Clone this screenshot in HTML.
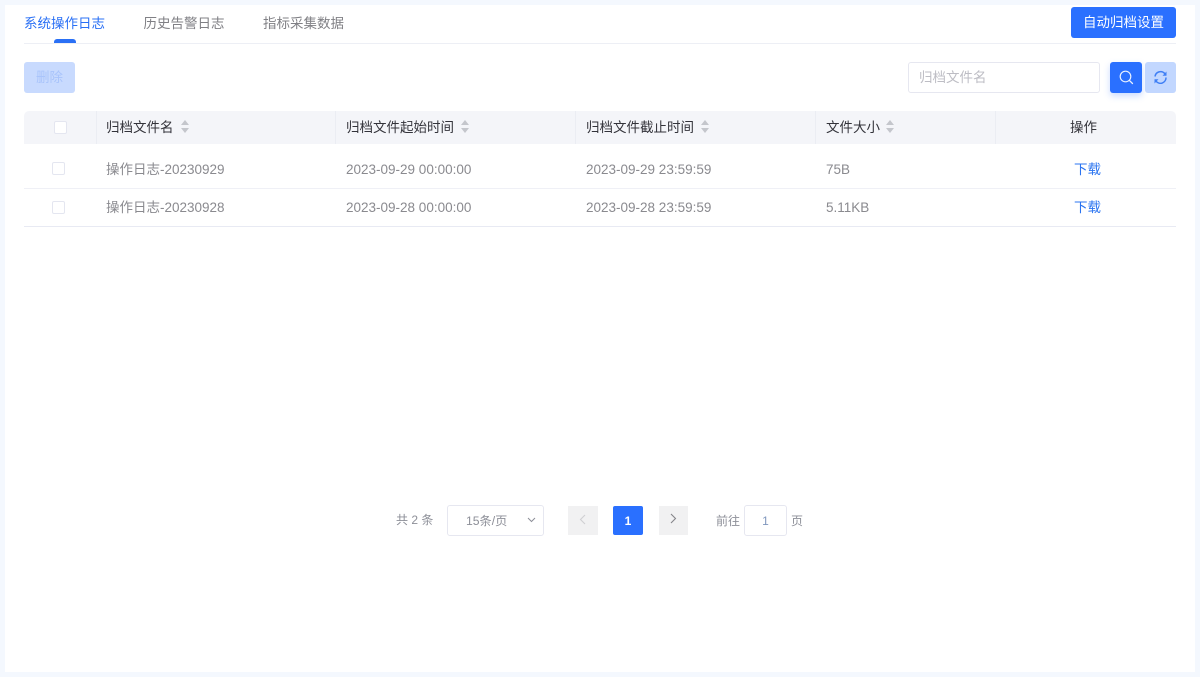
<!DOCTYPE html>
<html lang="zh-CN">
<head>
<meta charset="utf-8">
<title>归档</title>
<style>
html,body{margin:0;padding:0;width:1200px;height:677px;overflow:hidden;background:#f4f8fe}
body{font-family:"Liberation Sans","Noto Sans CJK SC",sans-serif;font-size:13.5px;color:#8a8a8f;position:relative}
.a{position:absolute;white-space:nowrap}
.t{line-height:20px;height:20px}
.cb{position:absolute;width:11px;height:11px;border:1px solid #e4e6f0;border-radius:2px;background:#fff}
.sep{position:absolute;top:111px;width:1px;height:33px;background:#ebedf3}
.sort{position:absolute;width:8px;height:13px}
.hd{color:#33333a}
.link{color:#2b74f0}
</style>
</head>
<body>
<div class="a" style="left:5px;top:5px;width:1190px;height:667px;background:#fff"></div>

<div class="a t" style="left:24px;top:14px;color:#2a70f5">系统操作日志</div>
<div class="a t" style="left:143.5px;top:14px;color:#808085">历史告警日志</div>
<div class="a t" style="left:263px;top:14px;color:#808085">指标采集数据</div>
<div class="a" style="left:24px;top:43px;width:1152px;height:1px;background:#edeff5"></div>
<div class="a" style="left:54px;top:39px;width:22px;height:4px;background:#2a70f5;border-radius:3px 3px 0 0"></div>
<div class="a" style="left:1071px;top:7px;width:105px;height:31px;line-height:31px;text-align:center;background:#2a70ff;color:#fff;border-radius:3px">自动归档设置</div>

<div class="a" style="left:24px;top:62px;width:51px;height:31px;line-height:31px;text-align:center;background:#c8dafe;color:#a9c4fb;border-radius:3px">删除</div>

<div class="a" style="left:908px;top:62px;width:190px;height:29px;border:1px solid #e6e7f0;border-radius:3px;line-height:29px;color:#bdbdc4;background:#fff"><span style="margin-left:10px">归档文件名</span></div>
<div class="a" style="left:1110px;top:62px;width:32px;height:31px;background:#2a70ff;border-radius:3px;box-shadow:0 3px 7px rgba(42,112,255,.25)">
<svg width="32" height="31" viewBox="0 0 32 31" style="display:block"><circle cx="15.5" cy="14.5" r="5.3" fill="none" stroke="#e8f0ff" stroke-width="1.2"/><path d="M19.4 18.4L22.5 21.5" stroke="#e8f0ff" stroke-width="1.3" fill="none" stroke-linecap="round"/></svg>
</div>
<div class="a" style="left:1145px;top:62px;width:31px;height:31px;background:#c2d7ff;border-radius:3px">
<svg width="31" height="31" viewBox="0 0 31 31" style="display:block"><path d="M10 14.5A5.6 5.6 0 0 1 19.8 11.6L21 13" fill="none" stroke="#3f7ff5" stroke-width="1.5"/><path d="M21 15.5A5.6 5.6 0 0 1 11.2 19.4L10 18" fill="none" stroke="#3f7ff5" stroke-width="1.5"/><path d="M21.5 9.5V13.8H17.5Z M9.5 21.5V17.2H13.5Z" fill="#3f7ff5"/></svg>
</div>

<div class="a" style="left:24px;top:111px;width:1152px;height:33px;background:#f4f5f9;border-radius:5px 5px 0 0"></div>
<div class="sep" style="left:96px"></div>
<div class="sep" style="left:335px"></div>
<div class="sep" style="left:575px"></div>
<div class="sep" style="left:815px"></div>
<div class="sep" style="left:995px"></div>
<div class="cb" style="left:54px;top:121px"></div>

<div class="a t hd" style="left:106px;top:118px">归档文件名</div>
<svg class="sort" style="left:181px;top:120px" viewBox="0 0 8 13"><path d="M4 0L8 5H0Z M0 8H8L4 13Z" fill="#c4c6cc"/></svg>
<div class="a t hd" style="left:346px;top:118px">归档文件起始时间</div>
<svg class="sort" style="left:461px;top:120px" viewBox="0 0 8 13"><path d="M4 0L8 5H0Z M0 8H8L4 13Z" fill="#c4c6cc"/></svg>
<div class="a t hd" style="left:586px;top:118px">归档文件截止时间</div>
<svg class="sort" style="left:701px;top:120px" viewBox="0 0 8 13"><path d="M4 0L8 5H0Z M0 8H8L4 13Z" fill="#c4c6cc"/></svg>
<div class="a t hd" style="left:826px;top:118px">文件大小</div>
<svg class="sort" style="left:886px;top:120px" viewBox="0 0 8 13"><path d="M4 0L8 5H0Z M0 8H8L4 13Z" fill="#c4c6cc"/></svg>
<div class="a t hd" style="left:1070px;top:118px">操作</div>

<div class="cb" style="left:52px;top:162px"></div>
<div class="a t" style="left:106px;top:160px">操作日志-20230929</div>
<div class="a t" style="left:346px;top:160px">2023-09-29 00:00:00</div>
<div class="a t" style="left:586px;top:160px">2023-09-29 23:59:59</div>
<div class="a t" style="left:826px;top:160px">75B</div>
<div class="a t link" style="left:1074px;top:160px">下载</div>
<div class="a" style="left:24px;top:188px;width:1152px;height:1px;background:#eff0f6"></div>

<div class="cb" style="left:52px;top:201px"></div>
<div class="a t" style="left:106px;top:198px">操作日志-20230928</div>
<div class="a t" style="left:346px;top:198px">2023-09-28 00:00:00</div>
<div class="a t" style="left:586px;top:198px">2023-09-28 23:59:59</div>
<div class="a t" style="left:826px;top:198px">5.11KB</div>
<div class="a t link" style="left:1074px;top:198px">下载</div>
<div class="a" style="left:24px;top:226px;width:1152px;height:1px;background:#e8eaf3"></div>

<div class="a t" style="left:396px;top:510px;font-size:12px;color:#8d8f98">共 2 条</div>
<div class="a" style="left:447px;top:505px;width:95px;height:29px;border:1px solid #e6e7f0;border-radius:3px;line-height:30px;font-size:12.2px;color:#8d8f98;background:#fff"><span style="margin-left:18px">15条/页</span></div>
<svg class="a" style="left:527px;top:517px" width="9" height="6" viewBox="0 0 9 6"><path d="M1 1L4.5 4.5L8 1" fill="none" stroke="#8d8f98" stroke-width="1"/></svg>

<div class="a" style="left:568px;top:506px;width:30px;height:29px;background:#f1f1f2"></div>
<svg class="a" style="left:579px;top:514px" width="7" height="11" viewBox="0 0 7 11"><path d="M6 1L1.5 5.5L6 10" fill="none" stroke="#cfcfd3" stroke-width="1.1"/></svg>
<div class="a" style="left:613px;top:506px;width:30px;height:29px;line-height:30px;text-align:center;background:#2a70ff;color:#fff;font-size:12px;font-weight:bold;border-radius:2px">1</div>
<div class="a" style="left:659px;top:506px;width:29px;height:29px;background:#f1f1f2"></div>
<svg class="a" style="left:670px;top:513px" width="7" height="11" viewBox="0 0 7 11"><path d="M1 1L5.5 5.5L1 10" fill="none" stroke="#85858a" stroke-width="1.1"/></svg>

<div class="a t" style="left:716px;top:511px;font-size:12px;color:#8d8f98">前往</div>
<div class="a" style="left:744px;top:505px;width:41px;height:29px;border:1px solid #e6e7f0;border-radius:3px;line-height:30px;text-align:center;font-size:12px;color:#7f97bd;background:#fff">1</div>
<div class="a t" style="left:791px;top:511px;font-size:12px;color:#8d8f98">页</div>
</body>
</html>
